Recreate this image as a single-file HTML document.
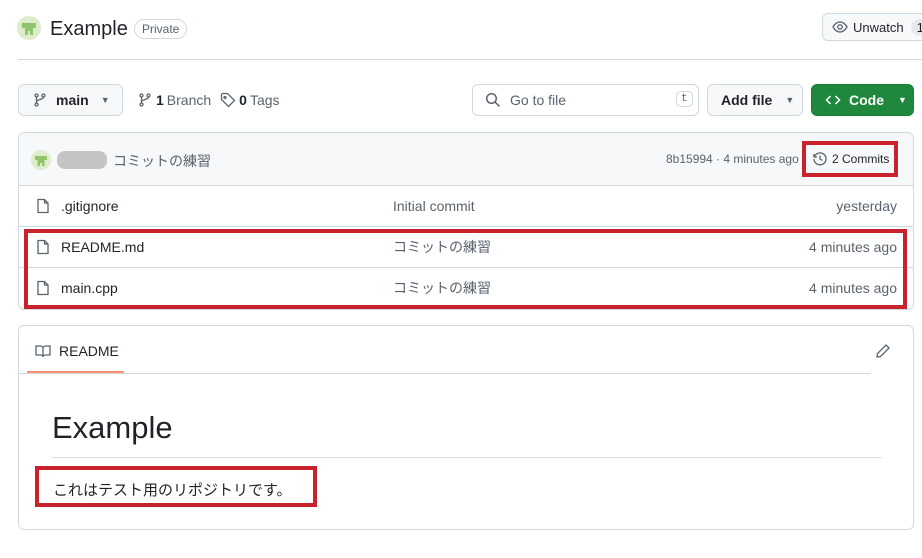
<!DOCTYPE html>
<html><head><meta charset="utf-8"><style>
*{box-sizing:border-box;margin:0;padding:0}
body{width:922px;height:558px;background:#fff;font-family:"Liberation Sans","Noto Sans CJK JP",sans-serif;color:#1f2328;position:relative;overflow:hidden;font-size:14px}
.a{position:absolute}
.btn{position:absolute;border:1px solid #d1d9e0;border-radius:6px;background:#f6f8fa;display:flex;align-items:center;font-weight:bold;font-size:14px}
.muted{color:#59636e}
.row{position:absolute;left:19px;width:894px;height:41px;border-top:1px solid #d1d9e0;display:flex;align-items:center;font-size:14px}
.red{position:absolute;border:4px solid #c8232c}
svg{display:block}
</style></head><body>
<div class="a" style="left:17px;top:16px;width:24px;height:24px;border-radius:50%;background:#dfeccc;overflow:hidden">
<svg width="24" height="24"><path d="M5 7h14v5h-3v7h-3v-4h-2v4H8v-7H5z" fill="#8fc46a"/></svg></div>
<div class="a" style="left:50px;top:18px;font-size:20px">Example</div>
<div class="a" style="left:134px;top:19px;border:1px solid #d1d9e0;border-radius:12px;padding:2px 7px;font-size:12px;color:#59636e">Private</div>
<div class="btn" style="left:822px;top:13px;width:110px;height:28px;padding-left:9px;font-size:13px;font-weight:normal">
<svg width="16" height="16" viewBox="0 0 16 16"><path d="M1 8s2.5-5 7-5 7 5 7 5-2.5 5-7 5-7-5-7-5z" fill="none" stroke="#59636e" stroke-width="1.3"/><circle cx="8" cy="8" r="2.2" fill="none" stroke="#59636e" stroke-width="1.3"/></svg>
<span style="margin-left:5px">Unwatch</span><span style="margin-left:7px;background:#e6eaef;border-radius:10px;padding:1px 6px">1</span></div>
<div class="a" style="left:18px;top:59px;width:904px;height:1px;background:#d1d9e0"></div>
<div class="btn" style="left:18px;top:84px;width:105px;height:32px;padding-left:13px">
<svg width="16" height="16" viewBox="0 0 16 16" fill="none" stroke="#59636e" stroke-width="1.3"><circle cx="4.5" cy="3.5" r="1.5"/><circle cx="4.5" cy="12.5" r="1.5"/><circle cx="11.5" cy="3.5" r="1.5"/><path d="M4.5 5v6M11.5 5c0 3-7 2-7 5"/></svg>
<span style="margin-left:8px">main</span><span style="margin-left:12px;font-size:9px;color:#59636e">▼</span></div>
<div class="a" style="left:137px;top:92px;display:flex;align-items:center;font-size:14px">
<svg width="16" height="16" viewBox="0 0 16 16" fill="none" stroke="#59636e" stroke-width="1.3"><circle cx="4.5" cy="3.5" r="1.5"/><circle cx="4.5" cy="12.5" r="1.5"/><circle cx="11.5" cy="3.5" r="1.5"/><path d="M4.5 5v6M11.5 5c0 3-7 2-7 5"/></svg>
<b style="margin-left:3px">1</b><span class="muted" style="margin-left:3px">Branch</span>
<svg style="margin-left:9px" width="16" height="16" viewBox="0 0 16 16" fill="none" stroke="#59636e" stroke-width="1.3"><path d="M1.5 2.5v5l7 7 6-6-7-7h-5z"/><circle cx="5" cy="5.5" r="1"/></svg>
<b style="margin-left:3px">0</b><span class="muted" style="margin-left:3px">Tags</span></div>
<div class="a" style="left:472px;top:84px;width:227px;height:32px;border:1px solid #d1d9e0;border-radius:6px;display:flex;align-items:center;padding-left:12px">
<svg width="16" height="16" viewBox="0 0 16 16" fill="none" stroke="#59636e" stroke-width="1.5"><circle cx="6.5" cy="6.5" r="4.8"/><path d="M10 10l4.5 4.5"/></svg>
<span class="muted" style="margin-left:9px;font-size:14px">Go to file</span>
<span class="a" style="left:203px;top:6px;border:1px solid #d1d9e0;border-radius:5px;font-family:'Liberation Mono',monospace;font-size:11px;padding:1px 4px;color:#59636e">t</span></div>
<div class="btn" style="left:707px;top:84px;width:96px;height:32px;padding-left:13px">Add file<span style="margin-left:13px;font-size:9px;color:#59636e">▼</span></div>
<div class="btn" style="left:811px;top:84px;width:103px;height:32px;padding-left:13px;background:#1f883d;border-color:#1a7f37;color:#fff">
<svg width="16" height="16" viewBox="0 0 16 16" fill="none" stroke="#fff" stroke-width="1.5"><path d="M5.5 4L1.5 8l4 4M10.5 4l4 4-4 4"/></svg>
<span style="margin-left:8px">Code</span><span style="margin-left:14px;font-size:9px">▼</span></div>
<div class="a" style="left:18px;top:132px;width:896px;height:178px;border:1px solid #d1d9e0;border-radius:6px;overflow:hidden">
<div style="height:53px;background:#f6f8fa;position:relative">
<div class="a" style="left:12px;top:17px;width:20px;height:20px;border-radius:50%;background:#dfeccc;overflow:hidden"><svg width="20" height="20"><path d="M4 6h12v4h-2.5v6H11v-3H9v3H6.5v-6H4z" fill="#8fc46a"/></svg></div>
<div class="a" style="left:38px;top:18px;width:50px;height:18px;border-radius:8px;background:#c4c4c4"></div>
<div class="a muted" style="left:94px;top:18px;font-size:14px">コミットの練習</div>
<div class="a muted" style="left:647px;top:19px;font-size:12px">8b15994 · 4 minutes ago</div>
<div class="a" style="left:793px;top:18px;display:flex;align-items:center;font-size:12px">
<svg width="16" height="16" viewBox="0 0 16 16" fill="none" stroke="#59636e" stroke-width="1.3"><path d="M2 3v3h3"/><path d="M2.3 6A6 6 0 1 1 2 8"/><path d="M8 4.5V8l2.5 1.5"/></svg>
<span style="margin-left:4px">2 Commits</span></div>
</div>
</div>
<div class="row" style="top:185px"><svg style="margin-left:16px" width="16" height="16" viewBox="0 0 16 16" fill="none" stroke="#59636e" stroke-width="1.3"><path d="M3 1.5h6.5l3.5 3.5v9.5H3z M9.5 1.5V5H13"/></svg><span style="position:absolute;left:42px">.gitignore</span><span class="muted" style="position:absolute;left:374px">Initial commit</span><span class="muted" style="position:absolute;right:16px">yesterday</span></div>
<div class="row" style="top:226px"><svg style="margin-left:16px" width="16" height="16" viewBox="0 0 16 16" fill="none" stroke="#59636e" stroke-width="1.3"><path d="M3 1.5h6.5l3.5 3.5v9.5H3z M9.5 1.5V5H13"/></svg><span style="position:absolute;left:42px">README.md</span><span class="muted" style="position:absolute;left:374px">コミットの練習</span><span class="muted" style="position:absolute;right:16px">4 minutes ago</span></div>
<div class="row" style="top:267px"><svg style="margin-left:16px" width="16" height="16" viewBox="0 0 16 16" fill="none" stroke="#59636e" stroke-width="1.3"><path d="M3 1.5h6.5l3.5 3.5v9.5H3z M9.5 1.5V5H13"/></svg><span style="position:absolute;left:42px">main.cpp</span><span class="muted" style="position:absolute;left:374px">コミットの練習</span><span class="muted" style="position:absolute;right:16px">4 minutes ago</span></div>
<div class="a" style="left:18px;top:325px;width:896px;height:205px;border:1px solid #d1d9e0;border-radius:6px">
<div class="a" style="left:0;top:47px;width:852px;height:1px;background:#d1d9e0"></div>
<div class="a" style="left:8px;top:45px;width:97px;height:2px;background:#fd8c73"></div>
<div class="a" style="left:16px;top:17px;display:flex;align-items:center;font-size:14px">
<svg width="16" height="16" viewBox="0 0 16 16" fill="none" stroke="#59636e" stroke-width="1.3"><path d="M1 3h4.5c1.5 0 2.5 1 2.5 2v9c0-1-1-2-2.5-2H1zM15 3h-4.5C9 3 8 4 8 5v9c0-1 1-2 2.5-2H15z"/></svg>
<span style="margin-left:8px">README</span></div>
<svg class="a" style="left:856px;top:17px" width="16" height="16" viewBox="0 0 16 16" fill="none" stroke="#59636e" stroke-width="1.3"><path d="M11 2l3 3-8.5 8.5L2 14l.5-3.5z"/></svg>
<div class="a" style="left:33px;top:84px;font-size:31px;font-weight:500">Example</div>
<div class="a" style="left:33px;top:131px;width:830px;height:1px;background:#d8dee4"></div>
<div class="a" style="left:34px;top:153px;font-size:15px">これはテスト用のリポジトリです。</div>
</div>
<div class="red" style="left:802px;top:141px;width:96px;height:36px"></div>
<div class="red" style="left:24px;top:229px;width:883px;height:80px"></div>
<div class="red" style="left:35px;top:466px;width:282px;height:41px"></div>
</body></html>
